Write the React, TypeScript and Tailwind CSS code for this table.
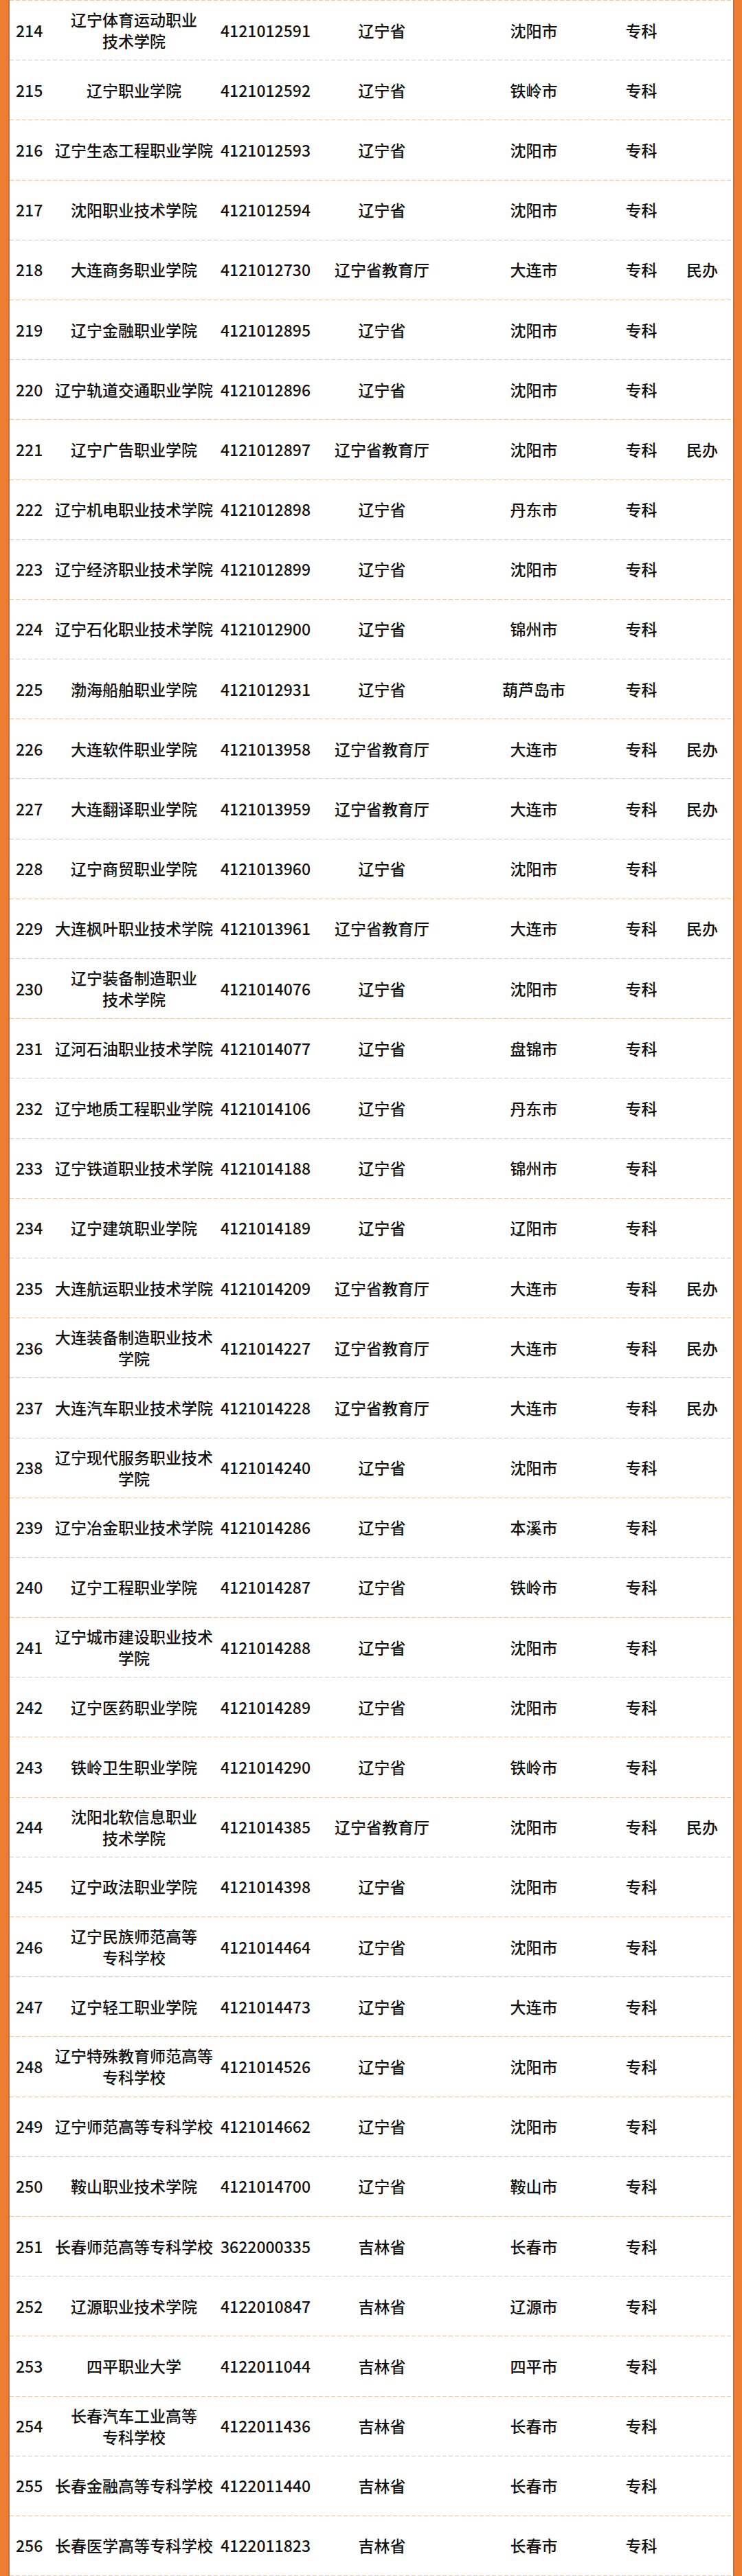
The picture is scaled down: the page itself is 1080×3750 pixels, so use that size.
import React from "react";

type Row = [number, string[], string, string, string, string, string];

const rows: Row[] = [
  [214, ["辽宁体育运动职业", "技术学院"], "4121012591", "辽宁省", "沈阳市", "专科", ""],
  [215, ["辽宁职业学院"], "4121012592", "辽宁省", "铁岭市", "专科", ""],
  [216, ["辽宁生态工程职业学院"], "4121012593", "辽宁省", "沈阳市", "专科", ""],
  [217, ["沈阳职业技术学院"], "4121012594", "辽宁省", "沈阳市", "专科", ""],
  [218, ["大连商务职业学院"], "4121012730", "辽宁省教育厅", "大连市", "专科", "民办"],
  [219, ["辽宁金融职业学院"], "4121012895", "辽宁省", "沈阳市", "专科", ""],
  [220, ["辽宁轨道交通职业学院"], "4121012896", "辽宁省", "沈阳市", "专科", ""],
  [221, ["辽宁广告职业学院"], "4121012897", "辽宁省教育厅", "沈阳市", "专科", "民办"],
  [222, ["辽宁机电职业技术学院"], "4121012898", "辽宁省", "丹东市", "专科", ""],
  [223, ["辽宁经济职业技术学院"], "4121012899", "辽宁省", "沈阳市", "专科", ""],
  [224, ["辽宁石化职业技术学院"], "4121012900", "辽宁省", "锦州市", "专科", ""],
  [225, ["渤海船舶职业学院"], "4121012931", "辽宁省", "葫芦岛市", "专科", ""],
  [226, ["大连软件职业学院"], "4121013958", "辽宁省教育厅", "大连市", "专科", "民办"],
  [227, ["大连翻译职业学院"], "4121013959", "辽宁省教育厅", "大连市", "专科", "民办"],
  [228, ["辽宁商贸职业学院"], "4121013960", "辽宁省", "沈阳市", "专科", ""],
  [229, ["大连枫叶职业技术学院"], "4121013961", "辽宁省教育厅", "大连市", "专科", "民办"],
  [230, ["辽宁装备制造职业", "技术学院"], "4121014076", "辽宁省", "沈阳市", "专科", ""],
  [231, ["辽河石油职业技术学院"], "4121014077", "辽宁省", "盘锦市", "专科", ""],
  [232, ["辽宁地质工程职业学院"], "4121014106", "辽宁省", "丹东市", "专科", ""],
  [233, ["辽宁铁道职业技术学院"], "4121014188", "辽宁省", "锦州市", "专科", ""],
  [234, ["辽宁建筑职业学院"], "4121014189", "辽宁省", "辽阳市", "专科", ""],
  [235, ["大连航运职业技术学院"], "4121014209", "辽宁省教育厅", "大连市", "专科", "民办"],
  [236, ["大连装备制造职业技术", "学院"], "4121014227", "辽宁省教育厅", "大连市", "专科", "民办"],
  [237, ["大连汽车职业技术学院"], "4121014228", "辽宁省教育厅", "大连市", "专科", "民办"],
  [238, ["辽宁现代服务职业技术", "学院"], "4121014240", "辽宁省", "沈阳市", "专科", ""],
  [239, ["辽宁冶金职业技术学院"], "4121014286", "辽宁省", "本溪市", "专科", ""],
  [240, ["辽宁工程职业学院"], "4121014287", "辽宁省", "铁岭市", "专科", ""],
  [241, ["辽宁城市建设职业技术", "学院"], "4121014288", "辽宁省", "沈阳市", "专科", ""],
  [242, ["辽宁医药职业学院"], "4121014289", "辽宁省", "沈阳市", "专科", ""],
  [243, ["铁岭卫生职业学院"], "4121014290", "辽宁省", "铁岭市", "专科", ""],
  [244, ["沈阳北软信息职业", "技术学院"], "4121014385", "辽宁省教育厅", "沈阳市", "专科", "民办"],
  [245, ["辽宁政法职业学院"], "4121014398", "辽宁省", "沈阳市", "专科", ""],
  [246, ["辽宁民族师范高等", "专科学校"], "4121014464", "辽宁省", "沈阳市", "专科", ""],
  [247, ["辽宁轻工职业学院"], "4121014473", "辽宁省", "大连市", "专科", ""],
  [248, ["辽宁特殊教育师范高等", "专科学校"], "4121014526", "辽宁省", "沈阳市", "专科", ""],
  [249, ["辽宁师范高等专科学校"], "4121014662", "辽宁省", "沈阳市", "专科", ""],
  [250, ["鞍山职业技术学院"], "4121014700", "辽宁省", "鞍山市", "专科", ""],
  [251, ["长春师范高等专科学校"], "3622000335", "吉林省", "长春市", "专科", ""],
  [252, ["辽源职业技术学院"], "4122010847", "吉林省", "辽源市", "专科", ""],
  [253, ["四平职业大学"], "4122011044", "吉林省", "四平市", "专科", ""],
  [254, ["长春汽车工业高等", "专科学校"], "4122011436", "吉林省", "长春市", "专科", ""],
  [255, ["长春金融高等专科学校"], "4122011440", "吉林省", "长春市", "专科", ""],
  [256, ["长春医学高等专科学校"], "4122011823", "吉林省", "长春市", "专科", ""],
];

function Dash() {
  return (
    <div className="h-px w-full bg-[repeating-linear-gradient(to_right,#f2c6a8_0px,#f2c6a8_6px,transparent_6px,transparent_9px)]" />
  );
}

export default function App() {
  return (
    <div
      className="flex w-[1080px] bg-white text-[#111111]"
      style={{ fontFamily: '"Noto Sans CJK SC", "Noto Sans", sans-serif' }}
    >
      <div className="w-[14px] shrink-0 bg-[#ed7d31] border-r-2 border-[#d8692a]" />
      <div className="flex flex-1 flex-col">
        {rows.map((r) => (
          <div key={r[0]} className="flex flex-col">
            <Dash />
            <div className="grid h-[86.2px] grid-cols-[56px_250px_133px_206px_236px_77px_95px] items-center text-[23px] font-medium leading-[31px]">
              <div className="pl-[9px]">{r[0]}</div>
              <div className="flex flex-col items-center text-center">
                {r[1].map((l, i) => (
                  <span key={i}>{l}</span>
                ))}
              </div>
              <div className="text-center">{r[2]}</div>
              <div className="text-center">{r[3]}</div>
              <div className="text-center">{r[4]}</div>
              <div className="text-center">{r[5]}</div>
              <div className="pl-[5px] text-center">{r[6]}</div>
            </div>
          </div>
        ))}
        <Dash />
      </div>
      <div className="w-[13px] shrink-0 bg-[#ed7d31] border-l-2 border-[#d8692a]" />
    </div>
  );
}
